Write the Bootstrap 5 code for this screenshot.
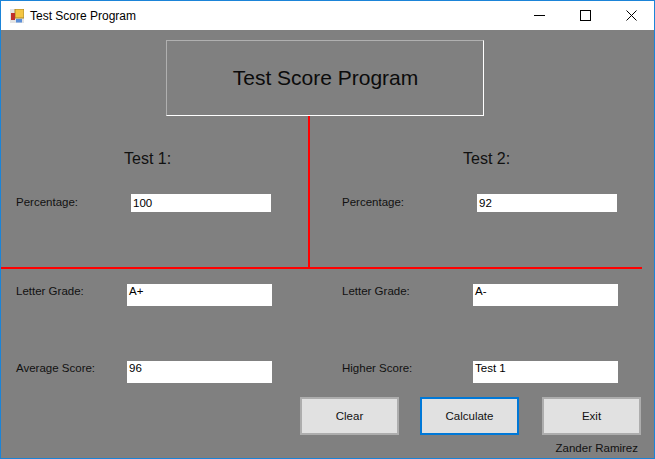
<!DOCTYPE html>
<html lang="en">
<head>
<meta charset="utf-8">
<title>Test Score Program</title>
<link href="https://cdn.jsdelivr.net/npm/bootstrap@5.3.0/dist/css/bootstrap.min.css" rel="stylesheet">
<style>
html,body{margin:0;height:459px;overflow:hidden;background:#808080}
body{font-family:"Liberation Sans",Arial,sans-serif;font-size:11.5px;color:#111;line-height:14px}
.win{width:655px;height:459px;border:1px solid #1b84d8;background:#808080}
.tbar{height:29px;background:#fff;color:#000;font-size:12px;padding-left:9px}
.ticon{width:14px;height:14px;margin-right:6px}
.tname{margin-top:0}
.wctl{width:46px;height:29px}
.wctl svg{display:block}
.hdrbox{width:318px;height:76px;margin:10px 0 0 165px;border:1px solid #fff;border-top-color:#b0b0b0;border-left-color:#b0b0b0;font-size:21px;color:#0b0b0b;padding-left:1px}
.upper{height:151px;width:641px;border-bottom:2px solid #f00;box-sizing:content-box}
.ucol1{width:307px;border-right:2px solid #f00;height:151px;box-sizing:content-box;margin-right:0}
.ucol2{flex:1}
.ttl{font-size:16px;line-height:18px;padding-top:34px;height:52px}
.ttl1{padding-left:123px}
.ttl2{padding-left:153px}
.frow{display:flex;align-items:flex-start}
.lab{width:115px;padding-top:0}
.pad1{padding-left:15px}
.pad2{padding-left:32px}
.ibox{background:#fff;color:#000;width:140px;height:18px;padding:2px 0 0 2px;margin-top:-1px;line-height:14px}
.lab-up{margin-top:27px}
.lower{width:641px}
.lcol1{width:309px}
.lcol2{width:332px}
.wide{width:145px;height:22px;padding:0 0 0 2px;margin:0;line-height:14px}
.lab2{width:111px;padding-top:0}
.lrow1{margin-top:15px;height:77px}
.lrow1 .lab2,.lrow2 .lab2{margin-top:0}
.lrow2{height:22px}
.bbar{padding-left:299px;margin-top:14px;height:38px}
.fbtn{width:99px;height:38px;border:2px solid #adadad;background:#e1e1e1;color:#111;font-size:11.5px;padding:0;border-radius:0;line-height:14px}
.fbtn:hover{background:#e1e1e1;border-color:#adadad;color:#111}
.fbtn.act,.fbtn.act:hover{border-color:#0078d7}
.gap1{margin-right:21px}
.gap2{margin-right:23px}
.sign{text-align:right;width:637px;margin-top:5px;font-size:11.5px;padding-top:1px}
</style>
</head>
<body>
<div class="win">
  <div class="tbar d-flex align-items-center">
    <svg class="ticon" viewBox="0 0 14 14" aria-hidden="true">
      <rect x="0" y="0" width="14" height="14" fill="#e4e4e4"/>
      <rect x="5" y="0" width="9" height="9" fill="#f4c542" stroke="#a8862a" stroke-width="1"/>
      <rect x="1" y="4" width="4" height="7" fill="#c0302a"/>
      <rect x="6" y="10" width="6" height="3.5" fill="#5b8fd8"/>
    </svg>
    <span class="tname flex-grow-1">Test Score Program</span>
    <div class="wctl d-flex align-items-center justify-content-center"><svg width="11" height="11" viewBox="0 0 11 11"><path d="M0 5.5H11" stroke="#000" stroke-width="1"/></svg></div>
    <div class="wctl d-flex align-items-center justify-content-center"><svg width="11" height="11" viewBox="0 0 11 11"><rect x=".5" y=".5" width="10" height="10" fill="none" stroke="#000"/></svg></div>
    <div class="wctl d-flex align-items-center justify-content-center"><svg width="11" height="11" viewBox="0 0 11 11"><path d="M.5.5L10.5 10.5M10.5.5L.5 10.5" stroke="#000" stroke-width="1"/></svg></div>
  </div>

  <div class="hdrbox d-flex align-items-center justify-content-center">Test Score Program</div>

  <div class="upper d-flex">
    <div class="ucol1">
      <div class="ttl ttl1">Test 1:</div>
      <div class="frow pad1 lab-up"><div class="lab">Percentage:</div><div class="ibox">100</div></div>
    </div>
    <div class="ucol2">
      <div class="ttl ttl2">Test 2:</div>
      <div class="frow pad2 lab-up"><div class="lab" style="width:135px">Percentage:</div><div class="ibox">92</div></div>
    </div>
  </div>

  <div class="lower d-flex">
    <div class="lcol1">
      <div class="frow pad1 lrow1"><div class="lab2">Letter Grade:</div><div class="ibox wide">A+</div></div>
      <div class="frow pad1 lrow2"><div class="lab2">Average Score:</div><div class="ibox wide">96</div></div>
    </div>
    <div class="lcol2">
      <div class="frow pad2 lrow1"><div class="lab2" style="width:131px">Letter Grade:</div><div class="ibox wide">A-</div></div>
      <div class="frow pad2 lrow2"><div class="lab2" style="width:131px">Higher Score:</div><div class="ibox wide">Test 1</div></div>
    </div>
  </div>

  <div class="bbar d-flex">
    <button type="button" class="btn fbtn gap1">Clear</button>
    <button type="button" class="btn fbtn act gap2">Calculate</button>
    <button type="button" class="btn fbtn">Exit</button>
  </div>
  <div class="sign">Zander Ramirez</div>
</div>
<script src="https://cdn.jsdelivr.net/npm/bootstrap@5.3.0/dist/js/bootstrap.bundle.min.js"></script>
</body>
</html>
